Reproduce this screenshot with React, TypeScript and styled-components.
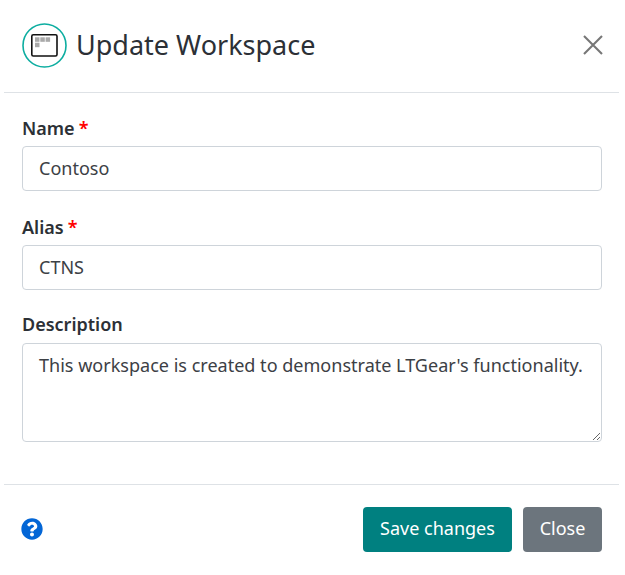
import React from "react";
import styled, { createGlobalStyle } from "styled-components";

const Global = createGlobalStyle`
  html, body { margin: 0; padding: 0; background: #fff; }
  * { box-sizing: border-box; }
  body { font-family: "Noto Sans", "Open Sans", sans-serif; color: #212529; }
`;

const Modal = styled.div`
  width: 615px;
  height: 575px;
  margin-left: 4px;
  display: flex;
  flex-direction: column;
  background: #fff;
`;

const Header = styled.header`
  height: 93px;
  padding: 23px 15px 0 18px;
  display: flex;
  align-items: flex-start;
  justify-content: space-between;
  border-bottom: 1px solid #dee2e6;
`;

const TitleGroup = styled.div`
  display: flex;
  align-items: center;
  gap: 10px;
`;

const Title = styled.h1`
  margin: -2px 0 0 -1px;
  font-size: 27px;
  line-height: 45px;
  font-weight: 400;
  color: #2c3036;
`;

const CloseButton = styled.button`
  width: 22px;
  height: 22px;
  margin-top: 11px;
  padding: 0;
  border: 0;
  background: none;
  display: flex;
`;

const Body = styled.div`
  height: 392px;
  padding: 23px 17px 0 18px;
  display: flex;
  flex-direction: column;
  border-bottom: 1px solid #dee2e6;
`;

const Field = styled.div<{ $gap: number }>`
  display: flex;
  flex-direction: column;
  margin-bottom: ${(p) => p.$gap}px;
`;

const Label = styled.label<{ $after?: number }>`
  font-size: 18px;
  line-height: 24px;
  font-weight: 600;
  margin-bottom: ${(p) => p.$after ?? 6}px;
  color: #2c3036;
`;

const Required = styled.span`
  color: #f00;
  margin-left: 4px;
`;

const Input = styled.input`
  height: 45px;
  padding: 0 16px 2px;
  border: 1px solid #ced4da;
  border-radius: 4px;
  font: 400 18px "Noto Sans", sans-serif;
  color: #3c4045;
  background: #fff;
  outline: none;
`;

const TextArea = styled.textarea`
  height: 99px;
  padding: 8px 16px;
  border: 1px solid #ced4da;
  border-radius: 4px;
  font: 400 18.05px/27px "Noto Sans", sans-serif;
  color: #3c4045;
  background: #fff;
  outline: none;
  resize: vertical;
`;

const Footer = styled.footer`
  padding: 22px 17px 0 18px;
  display: flex;
  align-items: flex-start;
  justify-content: space-between;
`;

const HelpIcon = styled.svg`
  width: 22px;
  height: 22px;
  margin-top: 11px;
  margin-left: -1px;
`;

const Actions = styled.div`
  display: flex;
  gap: 11px;
`;

const Button = styled.button<{ $bg: string; $w: number }>`
  width: ${(p) => p.$w}px;
  height: 45px;
  border: 0;
  border-radius: 4px;
  background: ${(p) => p.$bg};
  color: #fff;
  font: 400 18px "Noto Sans", sans-serif;
  padding: 0 0 3px;
`;

export default function App() {
  return (
    <>
      <Global />
      <Modal>
        <Header>
          <TitleGroup>
            <svg width="45" height="45" viewBox="0 0 45 45" fill="none">
              <circle cx="22.5" cy="22.5" r="21.5" stroke="#0cada0" strokeWidth="1.6" />
              <rect x="9.8" y="11.8" width="25.2" height="21.2" rx="1.5" fill="#fff" stroke="#111" strokeWidth="1.6" />
              <rect x="13" y="14.3" width="4.5" height="4.5" fill="#a9a9a9" />
              <rect x="18.3" y="14.3" width="4.5" height="4.5" fill="#a9a9a9" />
              <rect x="23.6" y="14.3" width="4.5" height="4.5" fill="#a9a9a9" />
              <rect x="13" y="19.7" width="4.5" height="4.5" fill="#a9a9a9" />
            </svg>
            <Title>Update Workspace</Title>
          </TitleGroup>
          <CloseButton aria-label="Close">
            <svg width="22" height="22" viewBox="0 0 22 22">
              <path d="M2 2 L20 20 M20 2 L2 20" stroke="#777" strokeWidth="2.1" />
            </svg>
          </CloseButton>
        </Header>
        <Body>
          <Field $gap={24}>
            <Label>Name<Required>*</Required></Label>
            <Input defaultValue="Contoso" />
          </Field>
          <Field $gap={22}>
            <Label>Alias<Required>*</Required></Label>
            <Input defaultValue="CTNS" />
          </Field>
          <Field $gap={0}>
            <Label $after={7}>Description</Label>
            <TextArea defaultValue="This workspace is created to demonstrate LTGear's functionality." />
          </Field>
        </Body>
        <Footer>
          <HelpIcon viewBox="0 0 512 512">
            <path fill="#0366d6" d="M504 256c0 137-111 248-248 248S8 393 8 256C8 119 119 8 256 8s248 111 248 248zM262.7 90c-54.5 0-89.3 23-116.5 63.8-3.5 5.3-2.4 12.4 2.7 16.3l34.7 26.3c5.2 3.9 12.6 3 16.7-2.1 17.9-22.7 30.1-35.8 57.3-35.8 20.4 0 45.7 13.1 45.7 32.9 0 15-12.4 22.7-32.5 34-23.5 13.2-54.6 29.6-54.6 70.7V300c0 6.6 5.4 12 12 12h56c6.6 0 12-5.4 12-12v-1.3c0-28.5 83.2-29.7 83.2-106.7 0-58-60.2-102-116.5-102zM256 338c-25.4 0-46 20.6-46 46 0 25.4 20.6 46 46 46s46-20.6 46-46c0-25.4-20.6-46-46-46z" />
          </HelpIcon>
          <Actions>
            <Button $bg="#008080" $w={149}>Save changes</Button>
            <Button $bg="#6c757d" $w={79}>Close</Button>
          </Actions>
        </Footer>
      </Modal>
    </>
  );
}
